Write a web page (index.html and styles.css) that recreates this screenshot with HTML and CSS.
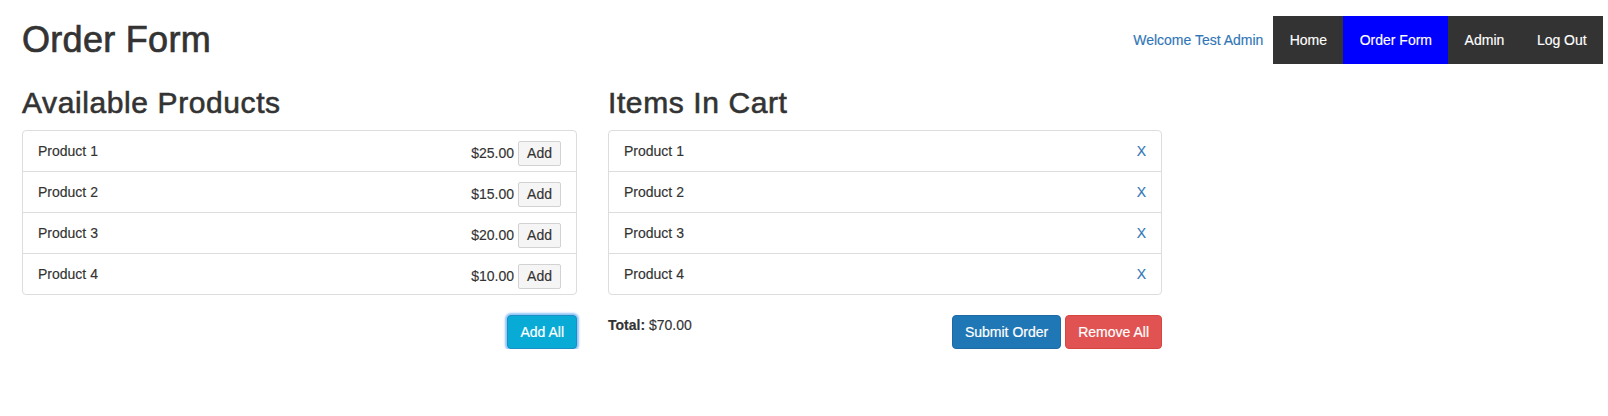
FILE: index.html
```html
<!DOCTYPE html>
<html lang="en">
<head>
<meta charset="utf-8">
<title>Order Form</title>
<link rel="stylesheet" href="styles.css">
</head>
<body>
<header class="topbar">
  <h1 class="page-title">Order Form</h1>
  <div class="top-right">
    <a class="welcome" href="#">Welcome Test Admin</a>
    <ul class="main-nav">
      <li><a href="#">Home</a></li>
      <li class="active"><a href="#">Order Form</a></li>
      <li><a href="#">Admin</a></li>
      <li><a href="#">Log Out</a></li>
    </ul>
  </div>
</header>
<main class="columns">
  <section class="panel-col col-left">
    <h2 class="section-title">Available Products</h2>
    <ul class="list-group">
      <li class="list-item"><span class="name">Product 1</span><span class="item-right"><span class="price">$25.00</span><button class="btn-add">Add</button></span></li>
      <li class="list-item"><span class="name">Product 2</span><span class="item-right"><span class="price">$15.00</span><button class="btn-add">Add</button></span></li>
      <li class="list-item"><span class="name">Product 3</span><span class="item-right"><span class="price">$20.00</span><button class="btn-add">Add</button></span></li>
      <li class="list-item"><span class="name">Product 4</span><span class="item-right"><span class="price">$10.00</span><button class="btn-add">Add</button></span></li>
    </ul>
    <div class="actions">
      <button class="btn btn-info btn-focus">Add All</button>
    </div>
  </section>
  <section class="panel-col col-right">
    <h2 class="section-title">Items In Cart</h2>
    <ul class="list-group">
      <li class="list-item"><span class="name">Product 1</span><a class="remove" href="#">X</a></li>
      <li class="list-item"><span class="name">Product 2</span><a class="remove" href="#">X</a></li>
      <li class="list-item"><span class="name">Product 3</span><a class="remove" href="#">X</a></li>
      <li class="list-item"><span class="name">Product 4</span><a class="remove" href="#">X</a></li>
    </ul>
    <div class="cart-footer">
      <p class="total"><strong>Total:</strong> $70.00</p>
      <div class="actions">
        <button class="btn btn-primary">Submit Order</button>
        <button class="btn btn-danger">Remove All</button>
      </div>
    </div>
  </section>
</main>
</body>
</html>
```

FILE: styles.css
```css
* {
  box-sizing: border-box;
}

html, body {
  margin: 0;
  padding: 0;
  background: #ffffff;
}

body {
  font-family: "Liberation Sans", Arial, Helvetica, sans-serif;
  font-size: 14px;
  line-height: 20px;
  color: #333333;
  -webkit-text-stroke: 0.15px currentColor;
}

a {
  color: #2f76b6;
  text-decoration: none;
}

.topbar {
  display: flex;
  justify-content: space-between;
  align-items: flex-start;
  padding: 0 5px 0 22px;
  height: 64px;
}

.page-title {
  margin: 20px 0 0;
  font-size: 36px;
  line-height: 1.1;
  font-weight: 400;
  letter-spacing: 0.3px;
  -webkit-text-stroke: 0.7px currentColor;
  color: #333333;
}

.top-right {
  display: flex;
  align-items: center;
  margin-top: 16px;
}

.welcome {
  margin-right: 10px;
  line-height: 20px;
}

.main-nav {
  display: flex;
  list-style: none;
  margin: 0;
  padding: 0;
  background: #333333;
  height: 48px;
}

.main-nav li a {
  display: block;
  padding: 14px 16.3px;
  line-height: 20px;
  color: #ffffff;
}

.main-nav li.active a {
  background: #0000ff;
}

.columns {
  display: flex;
  gap: 31px;
  padding: 0 22px;
}

.col-left {
  width: 555px;
}

.col-right {
  width: 554px;
}

.section-title {
  margin: 22px 0 11px;
  font-size: 30px;
  line-height: 33px;
  font-weight: 400;
  letter-spacing: 0.6px;
  -webkit-text-stroke: 0.6px currentColor;
  color: #333333;
}

.list-group {
  list-style: none;
  margin: 0 0 20px;
  padding: 0;
}

.list-item {
  box-sizing: content-box;
  display: flex;
  justify-content: space-between;
  align-items: flex-start;
  height: 20px;
  padding: 10px 15px;
  border: 1px solid #dddddd;
  margin-bottom: -1px;
  background: #ffffff;
}

.list-item:first-child {
  border-top-left-radius: 4px;
  border-top-right-radius: 4px;
}

.list-item:last-child {
  margin-bottom: 0;
  border-bottom-left-radius: 4px;
  border-bottom-right-radius: 4px;
}

.item-right {
  display: flex;
  align-items: baseline;
  gap: 4px;
}

.btn-add {
  font-family: inherit;
  font-size: 14px;
  line-height: 19px;
  padding: 2px 8px;
  color: #333333;
  background: #f5f5f5;
  border: 1px solid #d2d2d2;
  border-radius: 2px;
  -webkit-text-stroke: 0.15px currentColor;
}

.remove {
  line-height: 20px;
}

.actions {
  display: flex;
  justify-content: flex-end;
  gap: 4px;
}

.btn {
  font-family: inherit;
  font-size: 14px;
  line-height: 20px;
  padding: 6px 12px;
  border: 1px solid transparent;
  border-radius: 4px;
  color: #ffffff;
  cursor: pointer;
  -webkit-text-stroke: 0.2px currentColor;
}

.btn-info {
  background: #08aad6;
  border-color: #1a8fc4;
}

.btn-focus {
  box-shadow: 0 0 2px 2px rgba(90, 165, 240, 0.65);
}

.btn-primary {
  background: #2077b5;
  border-color: #1e6aa6;
}

.btn-danger {
  background: #e05352;
  border-color: #d8443f;
}

.cart-footer {
  display: flex;
  justify-content: space-between;
  align-items: flex-start;
}

.total {
  margin: 0;
  line-height: 20px;
}
```
